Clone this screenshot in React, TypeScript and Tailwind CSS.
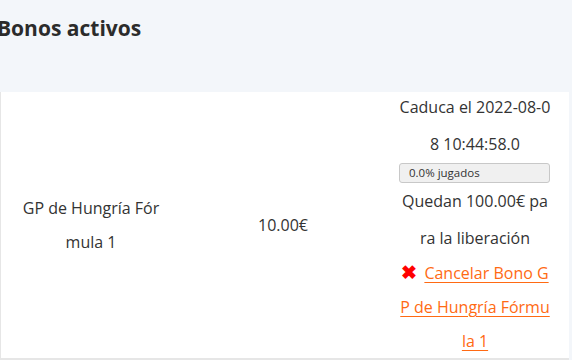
export default function App() {
  return (
    <div
      className="h-[360px] w-[572px] overflow-hidden bg-[#f3f6fa] text-[#333]"
      style={{ fontFamily: '"Open Sans", sans-serif' }}
    >
      <div className="h-[92px] pt-[13px]">
        <h2 className="-ml-[3px] text-[21px] font-bold leading-[30px] text-[#2b2b2b]">
          Bonos activos
        </h2>
      </div>
      <div className="grid h-[268px] w-[569px] grid-cols-[180px_204px_185px] border-b-2 border-l border-[#e6e6e6] bg-white text-[16px]">
        <div className="flex items-center justify-center px-[20px] text-center">
          <p className="break-all leading-[34px]">GP de Hungría Fórmula 1</p>
        </div>
        <div className="flex items-center justify-center text-center">
          <p className="leading-[34px]">10.00€</p>
        </div>
        <div className="pl-[14px] pr-[19px] text-center">
          <p className="-mt-[3px] break-all leading-[37px]">
            Caduca el 2022-08-08 10:44:58.0
          </p>
          <div className="h-[20px] w-[151px] rounded-[3px] border border-[#c8c8c8] bg-[#f0f0f0] pl-[9px] text-left text-[11.5px] leading-[18px] text-[#333]">
            0.0% jugados
          </div>
          <p className="break-all leading-[37px]">
            Quedan 100.00€ para la liberación
          </p>
          <p className="-mt-[1px] break-all leading-[34px]">
            <span className="mr-[7px] text-[19px] font-bold leading-[0] text-[#f00]">✖</span>
            <a href="#" className="text-[#ff6a13] underline underline-offset-[3px]">
              Cancelar Bono GP de Hungría Fórmula 1
            </a>
          </p>
        </div>
      </div>
    </div>
  );
}
